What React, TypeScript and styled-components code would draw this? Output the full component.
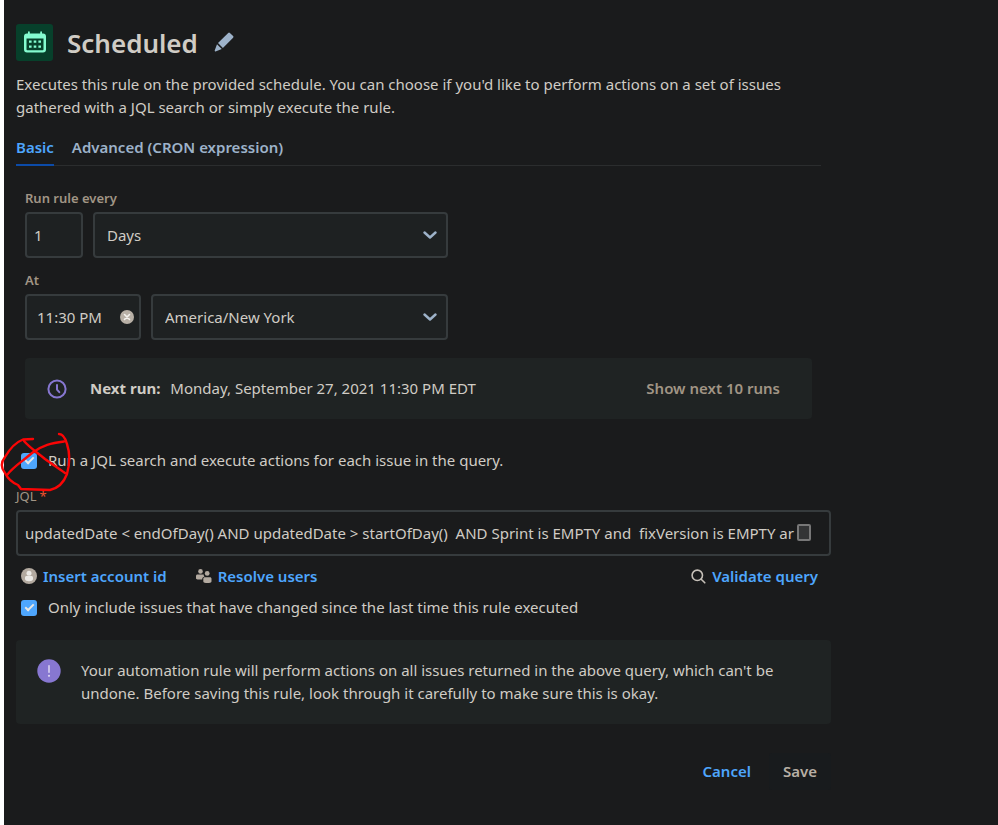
import React, { useState } from "react";
import styled, { createGlobalStyle } from "styled-components";

const color = {
  page: "#1a1b1c",
  field: "#1e2122",
  panel: "#1f2323",
  border: "#363b3d",
  text: "#d0ccc5",
  muted: "#a19585",
  steel: "#9db2c9",
  link: "#4ea6fd",
  accent: "#8777d1",
};

const GlobalStyle = createGlobalStyle`
  *, *::before, *::after { box-sizing: border-box; }
  body {
    margin: 0;
    background: ${color.page};
    color: ${color.text};
    font: 400 15px/23px "Noto Sans", "Open Sans", sans-serif;
  }
  button, input, select { font: inherit; color: inherit; }
  h1, p { margin: 0; }
`;

const Page = styled.main`
  min-height: 100vh;
  padding: 23px 167px 24px 12px;
  border-left: 4px solid #fff;
`;

const TitleRow = styled.header`
  display: flex;
  align-items: center;
  height: 38px;
`;

const TitleIcon = styled.span`
  display: grid;
  place-items: center;
  width: 37px;
  height: 37px;
  border-radius: 3px;
  background: #07402b;
`;

const Title = styled.h1`
  margin: 2px 16px 0 14px;
  font-size: 26px;
  line-height: 34px;
  font-weight: 600;
`;

const IconButton = styled.button`
  display: inline-flex;
  padding: 0;
  border: 0;
  background: none;
  cursor: pointer;
`;

const Description = styled.p`
  margin-top: 12px;
`;

const TabList = styled.div`
  display: flex;
  gap: 18px;
  margin: 16px 10px 0 0;
  border-bottom: 1px solid #2b2d2e;
`;

const Tab = styled.button<{ $active?: boolean }>`
  height: 31px;
  margin-bottom: -1px;
  padding: 0 0 4px;
  border: 0;
  border-bottom: 2px solid ${(p) => (p.$active ? "#0c4ba8" : "transparent")};
  background: none;
  color: ${(p) => (p.$active ? color.link : color.steel)};
  font-weight: 600;
  cursor: pointer;
`;

const Schedule = styled.section`
  padding: 23px 19px 0 9px;
`;

const FieldLabel = styled.label`
  display: block;
  height: 23px;
  color: ${color.muted};
  font-size: 13px;
  line-height: 18px;
  font-weight: 600;
`;

const FieldRow = styled.div`
  display: flex;
  gap: 10px;
  max-width: 423px;
  margin-bottom: 13px;
`;

const Control = styled.div<{ $width?: number }>`
  position: relative;
  display: flex;
  align-items: center;
  flex: ${(p) => (p.$width ? `0 0 ${p.$width}px` : "1 1 0")};
  min-width: 0;
  height: 46px;
  border: 2px solid ${color.border};
  border-radius: 4px;
  background: ${color.field};
`;

const QueryControl = styled(Control)`
  background: ${color.page};
`;

const TextInput = styled.input<{ $inset?: number }>`
  flex: 1;
  width: 100%;
  min-width: 0;
  height: 100%;
  padding: 0 ${(p) => p.$inset ?? 7}px;
  border: 0;
  outline: 0;
  background: none;
`;

const Select = styled.select`
  width: 100%;
  height: 100%;
  padding: 0 40px 0 12px;
  border: 0;
  outline: 0;
  appearance: none;
  background: none;
  option { background: ${color.field}; }
`;

const Chevron = styled.svg`
  position: absolute;
  right: 9px;
  top: 14px;
  pointer-events: none;
`;

const ClearButton = styled(IconButton)`
  margin-right: 5px;
`;

const NextRun = styled.div`
  display: flex;
  align-items: center;
  min-height: 61px;
  margin-top: 18px;
  padding: 0 32px 0 22px;
  border-radius: 4px;
  background: ${color.panel};
  svg { margin-right: 23px; }
  strong { margin-right: 10px; }
`;

const ShowRuns = styled.button`
  margin-left: auto;
  padding: 0;
  border: 0;
  background: none;
  color: ${color.muted};
  font-weight: 600;
  cursor: pointer;
`;

const CheckRow = styled.div`
  position: relative;
  display: flex;
  align-items: center;
  gap: 11px;
  padding-left: 5px;
`;

const FirstCheckRow = styled(CheckRow)`
  margin: 30px 0 16px;
`;

const Checkbox = styled.input`
  flex: none;
  width: 16px;
  height: 16px;
  margin: 0;
  border-radius: 3px;
  appearance: none;
  background: ${color.link};
  &:checked::after {
    content: "";
    display: block;
    width: 9px;
    height: 5px;
    margin: 4px 0 0 4px;
    border: solid #e8e6e3;
    border-width: 0 0 2px 2px;
    transform: rotate(-45deg);
  }
`;

const Scribble = styled.svg`
  position: absolute;
  left: -16px;
  top: -20px;
  pointer-events: none;
`;

const QueryLabel = styled(FieldLabel)`
  height: 22px;
  line-height: 16px;
  font-weight: 400;
  span { margin-left: 3px; color: #f0522f; }
`;

const ResizeBadge = styled.span`
  position: absolute;
  right: 18px;
  top: 12px;
  width: 14px;
  height: 17px;
  border: 2px solid #777;
  border-radius: 2px;
  background: #9993;
`;

const LinkRow = styled.div`
  display: flex;
  gap: 29px;
  height: 24px;
  margin: 8px 13px 8px 5px;
`;

const LinkButton = styled.button<{ $end?: boolean }>`
  display: inline-flex;
  align-items: center;
  gap: 6px;
  margin-left: ${(p) => (p.$end ? "auto" : 0)};
  padding: 0;
  border: 0;
  background: none;
  color: ${color.link};
  font-weight: 600;
  cursor: pointer;
`;

const Notice = styled.aside`
  display: flex;
  gap: 20px;
  min-height: 84px;
  margin-top: 21px;
  padding: 19px 32px 19px 21px;
  border-radius: 4px;
  background: ${color.panel};
  svg { flex: none; }
`;

const Actions = styled.footer`
  display: flex;
  justify-content: flex-end;
  gap: 4px;
  margin-top: 29px;
`;

const ActionButton = styled.button<{ $primary?: boolean }>`
  height: 37px;
  padding: 0 14px;
  border: 0;
  border-radius: 3px;
  background: ${(p) => (p.$primary ? "#181b1d" : "none")};
  color: ${(p) => (p.$primary ? "#b7afa4" : color.link)};
  font-weight: 600;
  cursor: pointer;
`;

const CalendarIcon = () => (
  <svg width="22" height="22" viewBox="0 0 22 22" aria-hidden="true">
    <path fill="#84fbd0" fillRule="evenodd" d="M3 2.500h1V1.200a.9.9 0 0 1 1.800 0v1.300h10.400V1.200a.9.9 0 0 1 1.800 0v1.300h1a3 3 0 0 1 3 3v13a3 3 0 0 1-3 3H3a3 3 0 0 1-3-3v-13a3 3 0 0 1 3-3ZM2.500 7.500v11c0 .6.300.8.800.8h15.400c.5 0 .8-.3.8-.8v-11Z" />
    <path fill="#84fbd0" d="M5 9.500h2.600v2.300H5zm4.700 0h2.600v2.300H9.700zm4.700 0h2.600v2.300h-2.600zM5 14.500h2.600v2.300H5zm4.700 0h2.600v2.300H9.700zm4.700 0h2.600v2.300h-2.600z" />
  </svg>
);

const PencilIcon = () => (
  <svg width="20" height="20" viewBox="0 0 20 20" aria-hidden="true">
    <path fill={color.steel} d="M14.200.900a1.200 1.200 0 0 1 1.700 0l3.200 3.200a1.200 1.200 0 0 1 0 1.700L8.900 16l-4.900-4.900ZM3 12.200l4.800 4.800-6.300 2.400c-.6.200-1-.2-.8-.8Z" />
  </svg>
);

const ChevronIcon = () => (
  <Chevron width="14" height="14" viewBox="0 0 14 14" aria-hidden="true">
    <path d="m1.500 4.500 5.500 5 5.500-5" fill="none" stroke={color.steel} strokeWidth="2.400" strokeLinecap="round" strokeLinejoin="round" />
  </Chevron>
);

const ClearIcon = () => (
  <svg width="14" height="14" viewBox="0 0 14 14" aria-hidden="true">
    <circle cx="7" cy="7" r="7" fill="#b8b0a6" />
    <path d="m4.500 4.500 5 5m0-5-5 5" stroke="#f4f2ee" strokeWidth="1.600" strokeLinecap="round" />
  </svg>
);

const ClockIcon = () => (
  <svg width="20" height="20" viewBox="0 0 20 20" fill="none" stroke={color.accent} strokeWidth="2" strokeLinecap="round" strokeLinejoin="round" aria-hidden="true">
    <circle cx="10" cy="10" r="8.600" />
    <path d="M10 6v4.600l2.300 2.600" />
  </svg>
);

const PersonIcon = () => (
  <svg width="16" height="16" viewBox="0 0 16 16" aria-hidden="true">
    <circle cx="8" cy="8" r="8" fill="#b3aaa0" />
    <circle cx="8" cy="5.200" r="2.500" fill="#eceae6" />
    <path d="M4 9.500c0-1 .8-1.500 1.700-1.500h4.600c.9 0 1.700.5 1.700 1.500V11c0 1.300-2 2.300-4 2.300S4 12.300 4 11Z" fill="#eceae6" />
  </svg>
);

const PeopleIcon = () => (
  <svg width="16" height="16" viewBox="0 0 16 16" fill="#b3aaa0" aria-hidden="true">
    <circle cx="4.500" cy="3.400" r="2.300" />
    <circle cx="11.200" cy="5.400" r="2.400" />
    <path d="M0 8c0-.9.600-1.500 1.500-1.500h6.200c0 1.200.4 1.800 1 2.300-1.600.1-2.500 1-2.500 2.600H1.500C.6 11.400 0 11 0 10.300Z" />
    <path d="M7.300 10.800c0-.9.600-1.500 1.500-1.500h5.200c.9 0 1.500.6 1.500 1.500v2.600c0 2-8.200 2-8.200 0Z" />
  </svg>
);

const SearchIcon = () => (
  <svg width="15" height="15" viewBox="0 0 15 15" fill="none" stroke="#c6c0b8" strokeWidth="1.600" strokeLinecap="round" aria-hidden="true">
    <circle cx="6.300" cy="6.300" r="5.200" />
    <path d="m10.200 10.200 3.600 3.600" />
  </svg>
);

const InfoIcon = () => (
  <svg width="24" height="24" viewBox="0 0 24 24" aria-hidden="true">
    <circle cx="12" cy="12" r="11.700" fill={color.accent} />
    <path d="M12 6.800v6.400" stroke="#d8d2f2" strokeWidth="1.600" strokeLinecap="round" />
    <circle cx="12" cy="16.800" r="1.100" fill="#d8d2f2" />
  </svg>
);

const ScribbleMark = () => (
  <Scribble width="76" height="66" viewBox="0 0 76 66" fill="none" stroke="#fb0505" strokeWidth="2.400" strokeLinecap="round" strokeLinejoin="round" aria-hidden="true">
    <path d="M33 10 L23 10.500 C14 14 9 21 5 28 C1 33 1 39 5 44 C8 50 13 54 18 56 L21 60 L50 61 C59 59 64 53 67 45 C70 34 70 24 67 15 C65 8 62 5 59 5" />
    <path d="M7 46 C14 37 23 32 32 24 C42 16 52 14 64 12.500" />
    <path d="M24 12 C31 20 37 23 45 30 C52 35 58 39 65 44" />
  </Scribble>
);

export default function App() {
  const [advanced, setAdvanced] = useState(false);
  const [time, setTime] = useState("11:30 PM");

  return (
    <>
      <GlobalStyle />
      <Page>
        <TitleRow>
          <TitleIcon><CalendarIcon /></TitleIcon>
          <Title>Scheduled</Title>
          <IconButton aria-label="Rename trigger"><PencilIcon /></IconButton>
        </TitleRow>
        <Description>
          Executes this rule on the provided schedule. You can choose if you'd like to perform actions on a set of issues gathered with a JQL search or simply execute the rule.
        </Description>
        <TabList role="tablist">
          <Tab role="tab" aria-selected={!advanced} $active={!advanced} onClick={() => setAdvanced(false)}>Basic</Tab>
          <Tab role="tab" aria-selected={advanced} $active={advanced} onClick={() => setAdvanced(true)}>Advanced (CRON expression)</Tab>
        </TabList>

        <Schedule>
          <FieldLabel htmlFor="interval">Run rule every</FieldLabel>
          <FieldRow>
            <Control $width={58}>
              <TextInput id="interval" defaultValue="1" />
            </Control>
            <Control>
              <Select aria-label="Interval unit" defaultValue="Days">
                <option>Days</option>
              </Select>
              <ChevronIcon />
            </Control>
          </FieldRow>
          <FieldLabel htmlFor="time">At</FieldLabel>
          <FieldRow>
            <Control $width={116}>
              <TextInput id="time" $inset={10} value={time} onChange={(e) => setTime(e.target.value)} />
              <ClearButton aria-label="Clear time" onClick={() => setTime("")}><ClearIcon /></ClearButton>
            </Control>
            <Control>
              <Select aria-label="Time zone" defaultValue="America/New York">
                <option>America/New York</option>
              </Select>
              <ChevronIcon />
            </Control>
          </FieldRow>
          <NextRun>
            <ClockIcon />
            <strong>Next run:</strong>
            <span>Monday, September 27, 2021 11:30 PM EDT</span>
            <ShowRuns>Show next 10 runs</ShowRuns>
          </NextRun>
        </Schedule>

        <FirstCheckRow>
          <Checkbox type="checkbox" id="run-search" defaultChecked />
          <label htmlFor="run-search">Run a JQL search and execute actions for each issue in the query.</label>
          <ScribbleMark />
        </FirstCheckRow>
        <QueryLabel htmlFor="jql">JQL<span>*</span></QueryLabel>
        <QueryControl>
          <TextInput
            id="jql"
            defaultValue="updatedDate < endOfDay() AND updatedDate > startOfDay()  AND Sprint is EMPTY and  fixVersion is EMPTY ar"
          />
          <ResizeBadge />
        </QueryControl>
        <LinkRow>
          <LinkButton><PersonIcon />Insert account id</LinkButton>
          <LinkButton><PeopleIcon />Resolve users</LinkButton>
          <LinkButton $end><SearchIcon />Validate query</LinkButton>
        </LinkRow>
        <CheckRow>
          <Checkbox type="checkbox" id="only-changed" defaultChecked />
          <label htmlFor="only-changed">Only include issues that have changed since the last time this rule executed</label>
        </CheckRow>

        <Notice>
          <InfoIcon />
          <p>
            Your automation rule will perform actions on all issues returned in the above query, which can't be undone. Before saving this rule, look through it carefully to make sure this is okay.
          </p>
        </Notice>
        <Actions>
          <ActionButton>Cancel</ActionButton>
          <ActionButton $primary>Save</ActionButton>
        </Actions>
      </Page>
    </>
  );
}
